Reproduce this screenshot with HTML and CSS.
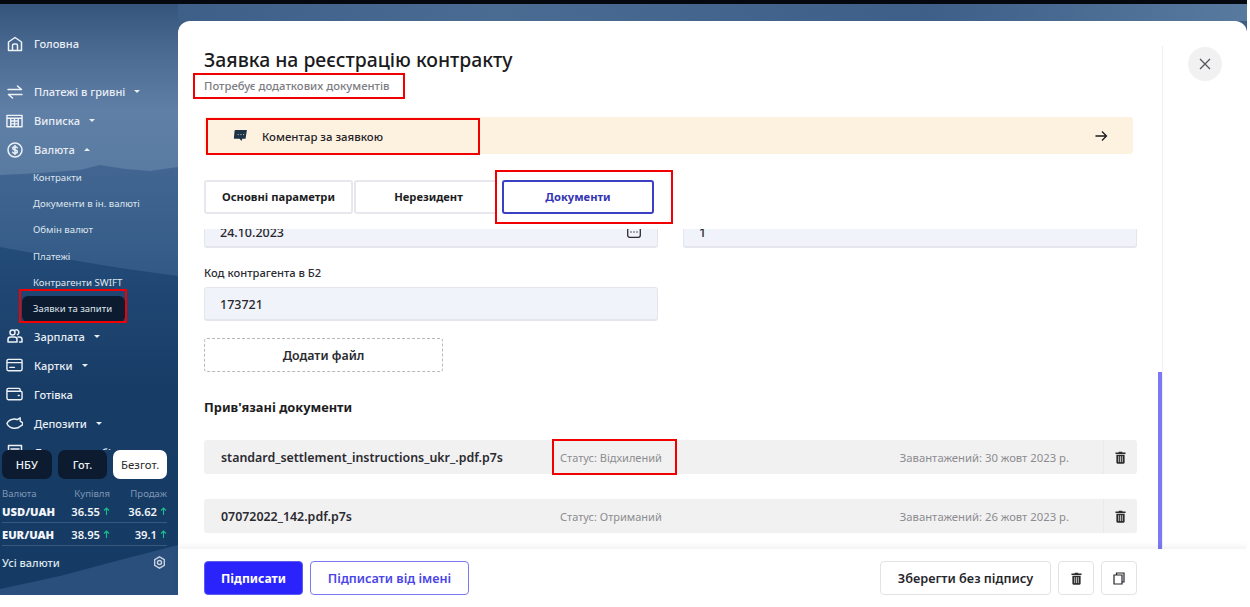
FILE: index.html
```html
<!DOCTYPE html>
<html lang="uk">
<head>
<meta charset="utf-8">
<title>Заявка на реєстрацію контракту</title>
<link rel="stylesheet" href="styles.css">
</head>
<body>
<div class="screen">
  <svg class="scenery" viewBox="0 0 1247 591" preserveAspectRatio="none" aria-hidden="true">
    <defs>
      <linearGradient id="sky" x1="0" y1="0" x2="0" y2="1"><stop offset="0" stop-color="#35557d"/><stop offset=".08" stop-color="#4a6a91"/><stop offset=".18" stop-color="#5f7fa6"/><stop offset=".3" stop-color="#587aa1"/></linearGradient>
      <linearGradient id="hill" x1="0" y1="0" x2="0" y2="1"><stop offset="0" stop-color="#426691"/><stop offset="1" stop-color="#2f5784"/></linearGradient>
      <linearGradient id="front" x1="0" y1="0" x2="0" y2="1"><stop offset="0" stop-color="#244c79"/><stop offset=".4" stop-color="#173c66"/><stop offset="1" stop-color="#153a63"/></linearGradient>
      <linearGradient id="strip" x1="0" y1="0" x2="1" y2="0"><stop offset="0" stop-color="#3e5f88"/><stop offset=".3" stop-color="#4a6b92"/><stop offset=".7" stop-color="#3d5f88"/><stop offset="1" stop-color="#587a9f"/></linearGradient>
    </defs>
    <rect width="1247" height="591" fill="url(#sky)"/>
    <rect x="178" width="1069" height="17" fill="url(#strip)"/>
    <path d="M0 171 L40 169 L80 166 L100 161 L125 165 L150 167 L178 163 V300 H0Z" fill="url(#hill)"/>
    <path d="M0 243 L60 254 L120 264 L178 272 V591 H0Z" fill="url(#front)"/>
    <path d="M0 585 L60 572 L120 556 L178 541 V591 H0Z" fill="#2a4f7c"/>
  </svg>

  <aside class="sidebar">
    <nav class="nav">
      <a class="nav-item nav-home"><svg class="ico" viewBox="0 0 16 16"><path d="M1.500 6 8 1.500 14.500 6v8.500h-13zM5.500 14.500V9.500q0-1.500 1.500-1.500h2q1.500 0 1.500 1.500v5"/></svg>Головна</a>
      <a class="nav-item"><svg class="ico" viewBox="0 0 16 16"><path d="M1 5.500h13.500L10.500 2M15 10.500H1.500L5.500 14"/></svg>Платежі в гривні<i class="caret"></i></a>
      <a class="nav-item"><svg class="ico ico-wide" viewBox="0 0 18 14"><path d="M1 1h16v12H1zM1 4h16M5 4v9M9 4v9M13 4v9M5 7h8M5 10h8"/></svg>Виписка<i class="caret"></i></a>
      <a class="nav-item"><svg class="ico" viewBox="0 0 16 16"><circle cx="8" cy="8" r="7"/><path d="M10.300 5.800Q9.800 4.700 8 4.700 5.800 4.700 5.800 6.300 5.800 7.700 8 8 10.300 8.300 10.300 9.800 10.300 11.300 8 11.300 6.200 11.300 5.700 10.200M8 3.500v9"/></svg>Валюта<i class="caret caret-up"></i></a>
      <div class="subnav">
        <a class="sub-item">Контракти</a>
        <a class="sub-item">Документи в ін. валюті</a>
        <a class="sub-item">Обмін валют</a>
        <a class="sub-item">Платежі</a>
        <a class="sub-item">Контрагенти SWIFT</a>
        <a class="sub-item sub-active">Заявки та запити</a>
      </div>
      <a class="nav-item"><svg class="ico" viewBox="0 0 16 16"><circle cx="5.500" cy="4.500" r="2.500"/><path d="M8 2.200a2.500 2.500 0 1 1 2.500 4.500M1 14v-2.500Q1 9 3.500 9h4Q10 9 10 11.500V14zM11 9h1.500Q15 9 15 11.500V14h-2.500"/></svg>Зарплата<i class="caret"></i></a>
      <a class="nav-item"><svg class="ico ico-wide" viewBox="0 0 18 14"><path d="M2.500 1h13Q17 1 17 2.500v9q0 1.500-1.500 1.500h-13Q1 13 1 11.500v-9Q1 1 2.500 1zM1 4.500h16M4 9.500h5"/></svg>Картки<i class="caret"></i></a>
      <a class="nav-item"><svg class="ico ico-wide" viewBox="0 0 18 14"><path d="M2.500 1h11Q15 1 15 2.500V4h.5Q17 4 17 5.500v6q0 1.500-1.500 1.500h-13Q1 13 1 11.500v-9Q1 1 2.500 1zM1 4h14M13 8.500h1"/></svg>Готівка</a>
      <a class="nav-item"><svg class="ico ico-wide" viewBox="0 0 18 14"><path d="M1 7.500Q3 3.500 7 3 10 2.500 12 3.500L15 1.500V5L17.500 6.500V9L15 10.500Q13 13 8 12.500 3 12 1 7.500z"/></svg>Депозити<i class="caret"></i></a>
      <a class="nav-item"><svg class="ico" viewBox="0 0 16 16"><path d="M1.500 1.500h13v13h-13zM4 5h8M4 8h8"/></svg>Документообіг</a>
    </nav>
    <section class="rates">
      <div class="rate-tabs">
        <button class="rate-tab">НБУ</button>
        <button class="rate-tab">Гот.</button>
        <button class="rate-tab rate-tab-on">Безгот.</button>
      </div>
      <div class="rate-row rate-head"><span>Валюта</span><span>Купівля</span><span>Продаж</span></div>
      <div class="rate-row rate-line"><b>USD/UAH</b><span>36.55<svg class="up" viewBox="0 0 7 8"><path d="M3.500 8V1M1 3.500 3.500 1 6 3.500"/></svg></span><span>36.62<svg class="up" viewBox="0 0 7 8"><path d="M3.500 8V1M1 3.500 3.500 1 6 3.500"/></svg></span></div>
      <div class="rate-row rate-line"><b>EUR/UAH</b><span>38.95<svg class="up" viewBox="0 0 7 8"><path d="M3.500 8V1M1 3.500 3.500 1 6 3.500"/></svg></span><span>39.1<svg class="up" viewBox="0 0 7 8"><path d="M3.500 8V1M1 3.500 3.500 1 6 3.500"/></svg></span></div>
      <div class="rate-foot"><span>Усі валюти</span>
        <svg class="gear" viewBox="0 0 14 14"><path d="M7 1 12.200 4v6L7 13 1.800 10V4z"/><circle cx="7" cy="7" r="2.200"/></svg>
      </div>
    </section>
  </aside>

  <main class="modal">
    <div class="modal-body">
      <div class="content">
        <header class="head">
          <h1 class="title">Заявка на реєстрацію контракту</h1>
          <p class="subtitle">Потребує додаткових документів</p>
        </header>
        <div class="comment">
          <svg class="comment-ico" viewBox="0 0 16 12"><path d="M2.500 0H15L13.500 9.500H10L9 12 7 9.500H1.500Q0.500 9.500 .8 8.500L1.500 1Q1.600 0 2.500 0z" fill="#1f3347"/><path d="M5 5h1M8 5h1M11 5h1" stroke="#fdf1df" stroke-width="1"/></svg>
          <span class="comment-text">Коментар за заявкою</span>
          <svg class="comment-arrow" viewBox="0 0 14 14"><path d="M1.500 7h11M8 2.500 12.500 7 8 11.500"/></svg>
        </div>
        <div class="tabs">
          <button class="tab tab-a">Основні параметри</button>
          <button class="tab tab-b">Нерезидент</button>
          <button class="tab tab-c">Документи</button>
        </div>
        <div class="scroll">
          <div class="field-row">
            <div class="input input-date"><span>24.10.2023</span>
              <svg class="kbd" viewBox="0 0 14 11"><rect x=".7" y=".7" width="12.600" height="9.600" rx="2"/><path d="M3.500 5h1M6.500 5h1M9.500 5h1"/></svg>
            </div>
            <div class="input input-date"><span>1</span></div>
          </div>
          <label class="label">Код контрагента в Б2</label>
          <div class="input input-code"><span>173721</span></div>
          <button class="add-file">Додати файл</button>
          <h2 class="docs-title">Прив'язані документи</h2>
          <div class="doc">
            <span class="doc-name">standard_settlement_instructions_ukr_.pdf.p7s</span>
            <span class="doc-status">Статус: Відхилений</span>
            <span class="doc-date">Завантажений: 30 жовт 2023 р.</span>
            <span class="doc-del"><svg class="trash" viewBox="0 0 12 14"><path d="M4 1.500V.8h4v.7h3.500v1.700H.5V1.500zM1.500 4h9v8.500q0 1.200-1.200 1.200H2.700q-1.200 0-1.200-1.200z" fill="#2c2c2c"/><path d="M4 5.500v6.500M6 5.500v6.500M8 5.500v6.500" stroke="#f0f0f0" stroke-width=".8"/></svg></span>
          </div>
          <div class="doc">
            <span class="doc-name">07072022_142.pdf.p7s</span>
            <span class="doc-status">Статус: Отриманий</span>
            <span class="doc-date">Завантажений: 26 жовт 2023 р.</span>
            <span class="doc-del"><svg class="trash" viewBox="0 0 12 14"><path d="M4 1.500V.8h4v.7h3.500v1.700H.5V1.500zM1.500 4h9v8.500q0 1.200-1.200 1.200H2.700q-1.200 0-1.200-1.200z" fill="#2c2c2c"/><path d="M4 5.500v6.500M6 5.500v6.500M8 5.500v6.500" stroke="#f0f0f0" stroke-width=".8"/></svg></span>
          </div>
        </div>
      </div>
      <div class="track"><div class="thumb"></div></div>
      <div class="side"><button class="close"><svg viewBox="0 0 12 12"><path d="M1 1l10 10M11 1 1 11"/></svg></button></div>
    </div>
    <footer class="footer">
      <button class="btn btn-primary">Підписати</button>
      <button class="btn btn-outline">Підписати від імені</button>
      <button class="btn btn-plain btn-save">Зберегти без підпису</button>
      <button class="btn btn-plain btn-icon"><svg class="trash" viewBox="0 0 12 14"><path d="M4 1.500V.8h4v.7h3.500v1.700H.5V1.500zM1.500 4h9v8.500q0 1.200-1.200 1.200H2.700q-1.200 0-1.200-1.200z" fill="#2c2c2c"/><path d="M4 5.500v6.500M6 5.500v6.500M8 5.500v6.500" stroke="#f0f0f0" stroke-width=".8"/></svg></button>
      <button class="btn btn-plain btn-icon"><svg class="copy" viewBox="0 0 12 13"><path d="M3.500 2.500V1h7.500v9H9M1 3h8v9H1z"/></svg></button>
    </footer>
  </main>

  <div class="mark mark-sub"></div>
  <div class="mark mark-comment"></div>
  <div class="mark mark-tab"></div>
  <div class="mark mark-nav"></div>
  <div class="mark mark-status"></div>
</div>
</body>
</html>
```
FILE: styles.css
```css
* { box-sizing: border-box; }
html, body { margin: 0; height: 100%; background: #fff; overflow: hidden; }
body { font-family: "Noto Sans", "Liberation Sans", sans-serif; color: #1c1c22; }
button { font-family: inherit; cursor: pointer; }

.screen {
  position: relative;
  width: 1247px;
  height: 595px;
  display: flex;
  border-top: 4px solid #05080f;
  overflow: hidden;
}
.scenery { position: absolute; inset: 0; width: 100%; height: 100%; }

/* sidebar */
.sidebar {
  position: relative;
  width: 178px;
  flex: none;
  display: flex;
  flex-direction: column;
  color: #e9eef5;
}
.nav { flex: none; height: 446px; overflow: hidden; padding-top: 25px; }
.nav-item {
  display: flex;
  align-items: center;
  height: 29px;
  padding-left: 6px;
  font-size: 11.100px;
  font-weight: 500;
  white-space: nowrap;
}
.nav-home { margin-bottom: 19px; }
.ico {
  width: 16px;
  height: 16px;
  margin: 0 11px 0 1px;
  flex: none;
  fill: none;
  stroke: #eef2f7;
  stroke-width: 1.500;
  stroke-linejoin: round;
  stroke-linecap: round;
}
.ico-wide { width: 17px; height: 14px; margin: 0 11px 0 0; }
.caret {
  margin-left: 9px;
  border-left: 3px solid transparent;
  border-right: 3px solid transparent;
  border-top: 3px solid #e9eef5;
}
.caret-up { border-top: 0; border-bottom: 3px solid #e9eef5; }
.subnav { display: flex; flex-direction: column; }
.sub-item {
  display: flex;
  align-items: center;
  height: 26.400px;
  padding-left: 33px;
  font-size: 9.650px;
  color: #dfe6ee;
  white-space: nowrap;
}
.sub-active {
  height: 26px;
  margin: 0 53px 0 22px;
  padding-left: 11px;
  font-size: 9.500px;
  background: #0c1b2f;
  border-radius: 6px;
}

.rates { flex: 1; padding: 0 11px 0 2px; display: flex; flex-direction: column; }
.rate-tabs { display: flex; gap: 6px; height: 29px; flex: none; }
.rate-tab {
  height: 29px;
  padding: 0;
  flex: 50 0 0;
  border: 0;
  border-radius: 7px;
  background: #0c1b2f;
  color: #eef2f7;
  font-size: 11px;
  font-weight: 500;
}
.rate-tab-on { flex: 54 0 0; background: #fff; color: #2a2a2a; font-size: 11.400px; font-weight: 400; }
.rate-row {
  display: grid;
  grid-template-columns: 1fr 52px 57px;
  align-items: center;
  text-align: right;
  flex: none;
}
.rate-row > :first-child { text-align: left; }
.rate-head { margin-top: 8px; height: 13px; font-size: 9.600px; color: #7f97b5; }
.rate-line {
  height: 23px;
  font-size: 11.200px;
  font-weight: 600;
  color: #f2f5f9;
  border-bottom: 1px solid #38587e;
}
.rate-line span { display: flex; align-items: center; justify-content: flex-end; }
.up { width: 7px; height: 8px; margin-left: 3px; fill: none; stroke: #19c08c; stroke-width: 1.100; }
.rate-foot {
  display: flex;
  align-items: center;
  justify-content: space-between;
  flex: none;
  height: 32px;
  font-size: 11px;
  font-weight: 500;
  color: #dfe6ee;
}
.gear { width: 13px; height: 13px; fill: none; stroke: #c9d3df; stroke-width: 1.500; margin-right: 1px; }

/* modal */
.modal {
  position: relative;
  flex: 1;
  min-width: 0;
  margin-top: 17px;
  display: flex;
  flex-direction: column;
  background: #fff;
  border-radius: 12px 12px 0 0;
}
.modal-body { flex: 1; min-height: 0; display: flex; }
.content { width: 980px; flex: none; padding-left: 26px; display: flex; flex-direction: column; min-height: 0; }
.head { height: 96px; padding-top: 26px; flex: none; }
.title { margin: 0; font-size: 19.400px; line-height: 26px; font-weight: 500; color: #1a1a20; }
.subtitle { margin: 5px 0 0; font-size: 11.300px; line-height: 15px; color: #7c7c82; font-weight: 500; }
.comment {
  display: flex;
  align-items: center;
  width: 929px;
  height: 37px;
  padding: 0 25px 0 29px;
  background: #fdf1df;
  border-radius: 3px;
  flex: none;
}
.comment-ico { width: 15px; height: 11px; margin-right: 14px; }
.comment-text { flex: 1; padding-top: 2px; font-size: 11.400px; font-weight: 500; color: #24242a; }
.comment-arrow { width: 14px; height: 14px; fill: none; stroke: #1a1a20; stroke-width: 1.300; }
.tabs { display: flex; gap: 1px; margin-top: 26px; height: 34px; flex: none; }
.tab {
  height: 34px;
  padding: 0 0 2px;
  background: #fff;
  border: 2px solid #e6e8ed;
  border-radius: 3px;
  font-size: 11.200px;
  font-weight: 700;
  color: #1c1c22;
}
.tab-a { width: 149px; }
.tab-b { width: 141px; padding-left: 6px; border-right: 0; border-radius: 3px 0 0 3px; }
.tab-c { width: 152px; margin-left: 6px; border-color: #3a3fc4; color: #3335b4; }
.scroll { margin-top: 15px; flex: 1; min-height: 0; overflow: hidden; width: 933px; }
.field-row { display: flex; gap: 25px; margin-top: -15px; }
.input {
  display: flex;
  align-items: center;
  justify-content: space-between;
  width: 454px;
  height: 34px;
  padding: 1px 16px 0 15px;
  background: #f0f3fa;
  border: 1px solid #e4e6ec;
  border-bottom-width: 2px;
  border-radius: 3px;
  font-size: 12.500px;
  font-weight: 500;
  color: #26262c;
}
.input-date { padding-top: 3px; }
.kbd { width: 14px; height: 11px; fill: none; stroke: #2c2c32; stroke-width: 1.300; }
.label { display: block; margin-top: 17px; font-size: 11.200px; line-height: 15px; font-weight: 500; color: #2c2c32; }
.input-code { margin-top: 7px; }
.add-file {
  display: block;
  width: 239px;
  height: 34px;
  margin-top: 17px;
  padding: 0;
  background: #fff;
  border: 1px dashed #b9b9bd;
  border-radius: 3px;
  font-size: 12.400px;
  font-weight: 600;
  color: #2a2a30;
}
.docs-title { margin: 26px 0 0; font-size: 12.800px; line-height: 18px; font-weight: 700; color: #1c1c22; }
.doc {
  display: flex;
  align-items: center;
  height: 34px;
  margin: 24px 0 0;
  background: #f1f1f1;
  border-radius: 3px;
  white-space: nowrap;
}
.doc + .doc { margin-top: 25px; }
.doc-name { width: 356px; padding-left: 17px; flex: none; font-size: 12.400px; font-weight: 600; color: #2a2a30; }
.doc-status { width: 320px; flex: none; font-size: 11px; color: #8c8c90; }
.doc-date { flex: 1; text-align: right; padding-right: 34px; font-size: 11.300px; color: #8c8c90; }
.doc-del {
  width: 34px;
  height: 34px;
  flex: none;
  display: flex;
  align-items: center;
  justify-content: center;
  border-left: 1px solid #eaeaea;
}
.trash { width: 11px; height: 13px; }
.track { width: 5px; flex: none; margin-top: 25px; border-right: 1px solid #eff0f2; display: flex; align-items: flex-end; }
.thumb { width: 4px; height: 177px; background: #7c78f5; }
.side { flex: 1; padding: 26px 0 0 25px; }
.close {
  display: flex;
  align-items: center;
  justify-content: center;
  width: 34px;
  height: 34px;
  padding: 0;
  border: 0;
  border-radius: 50%;
  background: #f1f1f1;
}
.close svg { width: 12px; height: 12px; fill: none; stroke: #55555c; stroke-width: 1.300; }

.footer {
  display: flex;
  align-items: flex-end;
  gap: 7px;
  flex: none;
  height: 46px;
  padding: 0 110px 0 26px;
  background: #fff;
  box-shadow: 0 -3px 5px rgba(0, 0, 0, .05);
  position: relative;
}
.btn {
  height: 34px;
  padding: 0;
  border-radius: 4px;
  font-size: 12.200px;
  font-weight: 600;
}
.btn-primary { width: 99px; background: #2a23fb; border: 1px solid #5d5cf0; color: #fff; font-weight: 700; }
.btn-outline { width: 159px; background: #fff; border: 1px solid #7c78f5; color: #4a45e8; font-size: 12.600px; }
.btn-plain { background: #fff; border: 1px solid #e3e3e6; color: #26262c; }
.btn-save { width: 171px; margin-left: auto; font-size: 12.700px; }
.btn-icon { width: 36px; display: flex; align-items: center; justify-content: center; }
.copy { width: 12px; height: 13px; fill: none; stroke: #26262c; stroke-width: 1.200; }

/* red annotation frames */
.mark { position: absolute; border: 2px solid #f00000; pointer-events: none; }
.mark-sub { left: 193px; top: 69px; width: 212px; height: 26px; }
.mark-comment { left: 206px; top: 114px; width: 274px; height: 37px; }
.mark-tab { left: 495px; top: 166px; width: 178px; height: 54px; }
.mark-nav { left: 19px; top: 285px; width: 108px; height: 34px; }
.mark-status { left: 552px; top: 435px; width: 125px; height: 36px; }
```
